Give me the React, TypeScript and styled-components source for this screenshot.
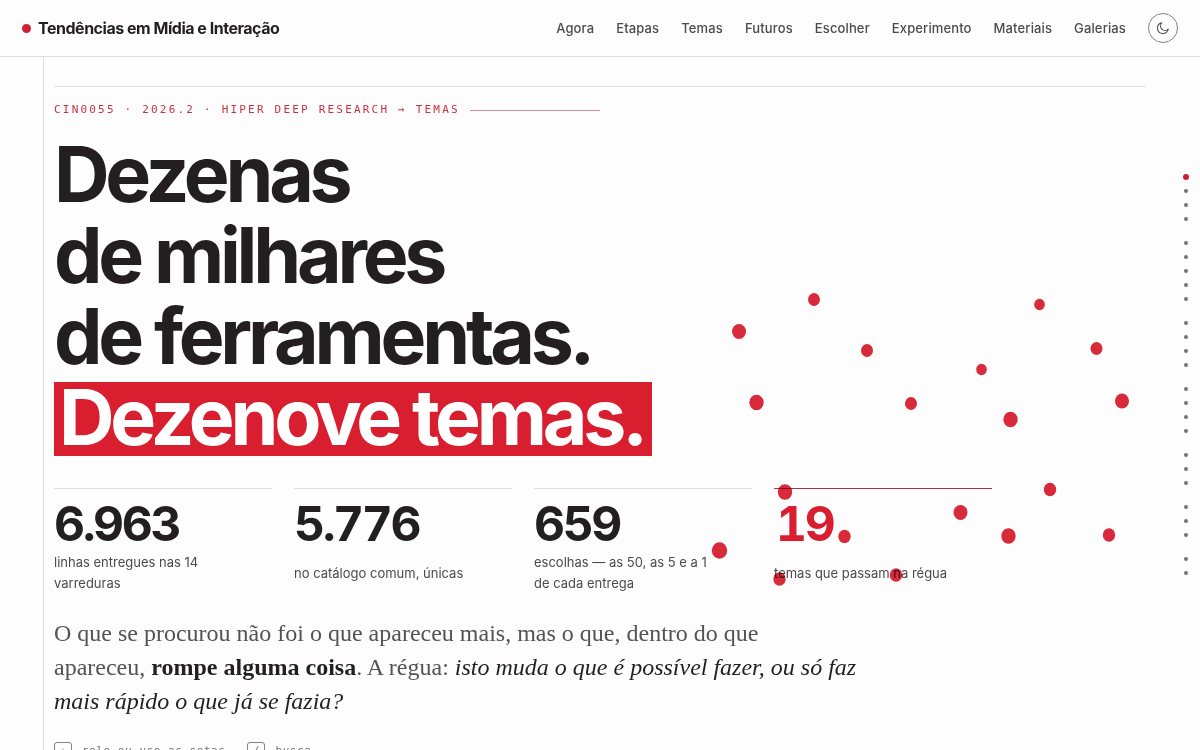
import React from "react";
import styled, { createGlobalStyle } from "styled-components";

const red = "#d81e2f";
const ink = "#231f20";
const soft = "#4d4a4b";
const rule = "#dedcdd";
const sans = `Inter, "Liberation Sans", sans-serif`;
const serif = `"Liberation Serif", serif`;
const mono = `"DejaVu Sans Mono", "Liberation Mono", monospace`;

const GlobalStyle = createGlobalStyle`
  * { box-sizing: border-box; }
  html { overflow: hidden; }
  body { margin: 0; background: #fdfdfd; color: ${ink}; font-family: ${sans}; }
`;

const Page = styled.div`
  position: relative;
  height: 100vh;
  display: flex;
  flex-direction: column;
  overflow: hidden;
`;

const TopBar = styled.header`
  flex: none;
  height: 57px;
  padding: 0 22px;
  display: flex;
  align-items: center;
  justify-content: space-between;
  border-bottom: 1px solid ${rule};
`;

const Brand = styled.a`
  display: flex;
  align-items: center;
  gap: 7px;
  color: ${ink};
  font-size: 16px;
  font-weight: 700;
  letter-spacing: -0.03em;
  text-decoration: none;
  &::before {
    content: "";
    width: 9px;
    height: 9px;
    border-radius: 50%;
    background: #cf2233;
  }
`;

const Nav = styled.nav`
  display: flex;
  align-items: center;
  gap: 22px;
`;

const NavLink = styled.a`
  color: ${soft};
  font-size: 13px;
  font-weight: 500;
  letter-spacing: 0.01em;
  text-decoration: none;
`;

const ThemeButton = styled.button`
  display: grid;
  place-items: center;
  width: 30px;
  height: 30px;
  padding: 0;
  border: 1px solid #858284;
  border-radius: 50%;
  background: none;
  color: ${soft};
`;

const Main = styled.main`
  flex: 1;
  margin-left: 43px;
  padding: 29px 54px 0 10px;
  border-left: 1px solid ${rule};
`;

const Hero = styled.section`
  border-top: 1px solid ${rule};
  padding-top: 14px;
`;

const Eyebrow = styled.p`
  display: flex;
  align-items: center;
  gap: 10px;
  width: 50%;
  margin: 0 0 15px;
  color: #c93243;
  font: 11px/18px ${mono};
  letter-spacing: 0.2em;
  white-space: nowrap;
  &::after {
    content: "";
    flex: 1;
    height: 1px;
    background: #dc8f97;
  }
`;

const Title = styled.h1`
  margin: 0;
  font-size: 77px;
  line-height: 81px;
  font-weight: 700;
  letter-spacing: -0.055em;
`;

const Line = styled.span`
  display: block;
`;

const Mark = styled.span`
  display: inline-block;
  padding: 0 8px 4px 5px;
  line-height: 70px;
  background: ${red};
  color: #fff;
`;

const Stats = styled.dl`
  display: grid;
  grid-template-columns: repeat(4, 218px);
  gap: 22px;
  margin: 30px 0 0;
`;

const Stat = styled.div<{ $accent?: boolean }>`
  display: flex;
  flex-direction: column-reverse;
  border-top: 1px solid ${(p) => (p.$accent ? "#a8324a" : rule)};
  color: ${(p) => (p.$accent ? red : ink)};
  padding-top: 11px;
`;

const Figure = styled.dd<{ $accent?: boolean }>`
  margin: 0;
  padding-left: ${(p) => (p.$accent ? 2 : 0)}px;
  font-size: 48px;
  line-height: 48px;
  font-weight: 700;
  letter-spacing: -0.05em;
  font-variant-numeric: tabular-nums;
`;

const Label = styled.dt`
  flex: 1;
  display: flex;
  align-items: center;
  margin-top: 4px;
  padding-right: 32px;
  color: ${soft};
  font-size: 13px;
  line-height: 21px;
`;

const Lead = styled.p`
  margin: 22px 0 0;
  color: #555253;
  font: 24px/34px ${serif};
  strong, em { color: ${ink}; }
`;

const Hints = styled.div`
  display: flex;
  gap: 22px;
  margin-top: 24px;
  color: #767374;
  font: 11px/18px ${mono};
`;

const Hint = styled.span`
  display: flex;
  align-items: center;
  gap: 10px;
  letter-spacing: 0.05em;
`;

const Key = styled.kbd`
  width: 18px;
  height: 18px;
  border: 1px solid #858284;
  border-radius: 3px;
  font: 10px/16px ${mono};
  text-align: center;
`;

const Field = styled.svg`
  position: absolute;
  top: 0;
  left: 0;
  mix-blend-mode: multiply;
  pointer-events: none;
`;

const Rail = styled.nav`
  position: absolute;
  top: 50%;
  right: 11px;
  transform: translateY(-50%);
  display: flex;
  flex-direction: column;
  gap: 10px;
`;

const RailGroup = styled.div`
  display: flex;
  flex-direction: column;
`;

const RailDot = styled.a<{ $on?: boolean }>`
  display: grid;
  place-items: center;
  width: 6px;
  height: 14px;
  &::before {
    content: "";
    width: ${(p) => (p.$on ? 6 : 4)}px;
    height: ${(p) => (p.$on ? 6 : 4)}px;
    border-radius: 50%;
    background: ${(p) => (p.$on ? "#c9202f" : "#757274")};
  }
`;

const links = ["Agora", "Etapas", "Temas", "Futuros", "Escolher", "Experimento", "Materiais", "Galerias"];

const stats = [
  { value: "6.963", label: "linhas entregues nas 14 varreduras" },
  { value: "5.776", label: "no catálogo comum, únicas" },
  { value: "659", label: "escolhas — as 50, as 5 e a 1 de cada entrega" },
  { value: "19", label: "temas que passam na régua", accent: true },
];

const railGroups = [4, 5, 4, 4, 3, 3, 2];

const points = [
  [813.5, 299, 6], [1039, 304, 5.3], [738.5, 331, 7], [866.5, 350, 6], [1096, 348, 6],
  [981, 369, 5.3], [756, 402, 7.2], [910.5, 403, 6], [1010, 419, 7.2], [1121.5, 400.5, 7],
  [784.5, 491.5, 7.2], [1049.5, 489, 6.2], [960, 512, 7], [844, 536, 6.2], [1008, 535.5, 7.2],
  [1108.5, 534.5, 6.2], [719, 550, 7.7], [895.5, 574.5, 6.2], [779, 578.5, 6.2],
];

export default function App() {
  return (
    <>
      <GlobalStyle />
      <Page>
        <TopBar>
          <Brand href="#">Tendências em Mídia e Interação</Brand>
          <Nav>
            {links.map((l) => (
              <NavLink key={l} href={`#${l.toLowerCase()}`}>{l}</NavLink>
            ))}
            <ThemeButton aria-label="Alternar tema">
              <svg width="14" height="14" viewBox="0 0 24 24" fill="none" stroke="currentColor" strokeWidth="1.8" strokeLinejoin="round">
                <path d="M21 14A9.300 9.300 0 1 1 10 3a7.500 7.500 0 0 0 11 11z" />
              </svg>
            </ThemeButton>
          </Nav>
        </TopBar>
        <Main>
          <Hero>
            <Eyebrow>CIN0055 · 2026.2 · HIPER DEEP RESEARCH → TEMAS</Eyebrow>
            <Title>
              <Line>Dezenas</Line>
              <Line>de milhares</Line>
              <Line>de ferramentas.</Line>
              <Line><Mark>Dezenove temas.</Mark></Line>
            </Title>
            <Stats>
              {stats.map((s) => (
                <Stat key={s.value} $accent={s.accent}>
                  <Label>{s.label}</Label>
                  <Figure $accent={s.accent}>{s.value}</Figure>
                </Stat>
              ))}
            </Stats>
            <Lead>
              O que se procurou não foi o que apareceu mais, mas o que, dentro do que
              <br />
              apareceu, <strong>rompe alguma coisa</strong>. A régua:{" "}
              <em>isto muda o que é possível fazer, ou só faz</em>
              <br />
              <em>mais rápido o que já se fazia?</em>
            </Lead>
            <Hints>
              <Hint><Key>↓</Key>role ou use as setas</Hint>
              <Hint><Key>/</Key>busca</Hint>
            </Hints>
          </Hero>
        </Main>
        <Field width="1200" height="750" aria-hidden="true">
          <g transform="translate(0.5 0.5)" fill="#da2a3a">
            {points.map(([x, y, r]) => (
              <ellipse key={`${x}-${y}`} cx={x} cy={y} rx={r} ry={r + 0.5} />
            ))}
          </g>
        </Field>
        <Rail aria-label="Seções">
          {railGroups.map((n, g) => (
            <RailGroup key={g}>
              {Array.from({ length: n }, (_, i) => (
                <RailDot key={i} href={`#s${g}-${i}`} aria-label={`Seção ${g + 1}.${i + 1}`} $on={g === 0 && i === 0} />
              ))}
            </RailGroup>
          ))}
        </Rail>
      </Page>
    </>
  );
}
